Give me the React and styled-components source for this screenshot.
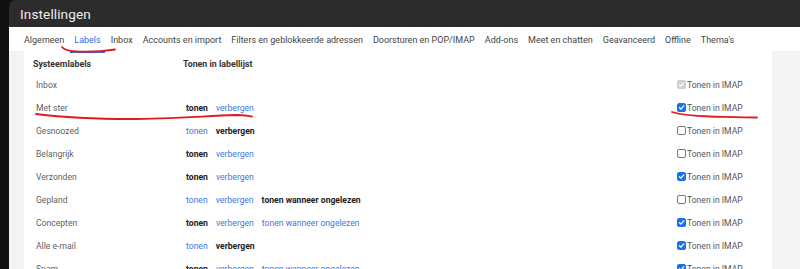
import React from 'react';
import styled, { createGlobalStyle } from 'styled-components';

const GlobalStyle = createGlobalStyle`
  html, body {
    margin: 0;
    padding: 0;
    background: #111111;
    font-family: Roboto, "Liberation Sans", Arial, sans-serif;
  }
`;

const Page = styled.div`
  width: 800px;
  height: 269px;
  display: flex;
  overflow: hidden;
  position: relative;
  background: #111111;
`;

const LeftStrip = styled.div`
  width: 9px;
  flex: none;
  background: #111111;
`;

const Main = styled.div`
  flex: 1;
  display: flex;
  flex-direction: column;
  min-width: 0;
`;

const TopBar = styled.div`
  height: 27px;
  flex: none;
  background: #2c2c2c;
  border-top-left-radius: 7px;
  display: flex;
  align-items: center;
  padding-left: 11px;
  color: #ececec;
  font-size: 13.6px;
  letter-spacing: 0.1px;
`;

const TabBar = styled.div`
  height: 24px;
  flex: none;
  background: #ffffff;
  display: flex;
  align-items: center;
  gap: 10px;
  padding-left: 15px;
`;

const Tab = styled.span`
  position: relative;
  font-size: 9px;
  color: ${p => (p.$active ? '#1a73e8' : '#444444')};
  white-space: nowrap;
  padding-top: 1px;

  &::after {
    content: '';
    display: ${p => (p.$active ? 'block' : 'none')};
    position: absolute;
    left: -4px;
    right: -4px;
    bottom: -8px;
    height: 2px;
    background: #1a73e8;
  }
`;

const Body = styled.div`
  flex: 1;
  background: #f3f3f3;
  display: flex;
  padding: 0 28px 0 15px;
`;

const Panel = styled.div`
  flex: 1;
  background: #ffffff;
  padding: 4px 0 0 9px;
`;

const Grid = styled.div`
  display: grid;
  grid-template-columns: 150px 494px 1fr;
`;

const HeadCell = styled.div`
  height: 18px;
  display: flex;
  align-items: center;
  font-size: 8.8px;
  font-weight: 700;
  color: #333333;
`;

const Cell = styled.div`
  height: 23px;
  display: flex;
  align-items: center;
  gap: 8px;
  padding-left: ${p => (p.$pad ? '3px' : '0')};
  font-size: 8.6px;
  color: #5f5f5f;
  white-space: nowrap;
`;

const Choice = styled.span`
  color: ${p => (p.$link ? '#3b78e0' : '#222222')};
  font-weight: ${p => (p.$link ? 400 : 700)};
`;

const Box = styled.span`
  width: 9px;
  height: 9px;
  box-sizing: border-box;
  border-radius: 2px;
  display: inline-flex;
  align-items: center;
  justify-content: center;
  background: ${p => (p.$disabled ? '#cfcfcf' : p.$checked ? '#1a73e8' : '#ffffff')};
  border: 1px solid ${p => (p.$disabled ? '#cfcfcf' : p.$checked ? '#1a73e8' : '#777777')};
  margin-right: 1px;
`;

const ImapLabel = styled.span`
  display: inline-flex;
  align-items: center;
  font-size: 8.6px;
  color: #555555;
`;

const Scribble = styled.svg`
  position: absolute;
  left: 0;
  top: 0;
  pointer-events: none;
`;

const tabs = [
  'Algemeen', 'Labels', 'Inbox', 'Accounts en import',
  'Filters en geblokkeerde adressen', 'Doorsturen en POP/IMAP',
  'Add-ons', 'Meet en chatten', 'Geavanceerd', 'Offline', "Thema's",
];

// b = bold (current), l = link
const rows = [
  { name: 'Inbox', opts: [], imap: 'disabled' },
  { name: 'Met ster', opts: [['tonen', 'b'], ['verbergen', 'l']], imap: 'on' },
  { name: 'Gesnoozed', opts: [['tonen', 'l'], ['verbergen', 'b']], imap: 'off' },
  { name: 'Belangrijk', opts: [['tonen', 'b'], ['verbergen', 'l']], imap: 'off' },
  { name: 'Verzonden', opts: [['tonen', 'b'], ['verbergen', 'l']], imap: 'on' },
  { name: 'Gepland', opts: [['tonen', 'l'], ['verbergen', 'l'], ['tonen wanneer ongelezen', 'b']], imap: 'off' },
  { name: 'Concepten', opts: [['tonen', 'b'], ['verbergen', 'l'], ['tonen wanneer ongelezen', 'l']], imap: 'on' },
  { name: 'Alle e-mail', opts: [['tonen', 'l'], ['verbergen', 'b']], imap: 'on' },
  { name: 'Spam', opts: [['tonen', 'b'], ['verbergen', 'l'], ['tonen wanneer ongelezen', 'l']], imap: 'on' },
];

const Check = ({ state }) => (
  <Box $checked={state === 'on'} $disabled={state === 'disabled'}>
    {state !== 'off' && (
      <svg width="7" height="7" viewBox="0 0 10 10">
        <path d="M2 5.2 L4.2 7.4 L8.2 2.6" fill="none" stroke="#ffffff" strokeWidth="1.8" strokeLinecap="round" strokeLinejoin="round" />
      </svg>
    )}
  </Box>
);

const App = () => (
  <>
    <GlobalStyle />
    <Page>
      <LeftStrip />
      <Main>
        <TopBar>Instellingen</TopBar>
        <TabBar>
          {tabs.map(t => (
            <Tab key={t} $active={t === 'Labels'}>{t}</Tab>
          ))}
        </TabBar>
        <Body>
          <Panel>
            <Grid>
              <HeadCell>Systeemlabels</HeadCell>
              <HeadCell>Tonen in labellijst</HeadCell>
              <HeadCell />
              {rows.map(r => (
                <React.Fragment key={r.name}>
                  <Cell $pad>{r.name}</Cell>
                  <Cell $pad>
                    {r.opts.map(([text, kind]) => (
                      <Choice key={text} $link={kind === 'l'}>{text}</Choice>
                    ))}
                  </Cell>
                  <Cell>
                    <ImapLabel>
                      <Check state={r.imap} />
                      Tonen in IMAP
                    </ImapLabel>
                  </Cell>
                </React.Fragment>
              ))}
            </Grid>
          </Panel>
        </Body>
      </Main>
      <Scribble width="800" height="269" viewBox="0 0 800 269">
        <g fill="none" stroke="#e01b22" strokeWidth="1.8" strokeLinecap="round">
          <path d="M62 47 C64 50 68 51 76 51.5 C88 52 102 51.5 115 49.5" />
          <path d="M36 114 C60 117 95 119 130 119 C170 119 205 116 235 115 C244 115 249 116 252 116.5" />
          <path d="M672 112 C682 115 695 116 710 116.5 C730 117 745 117.5 757 117.5" />
        </g>
      </Scribble>
    </Page>
  </>
);

export default App;
